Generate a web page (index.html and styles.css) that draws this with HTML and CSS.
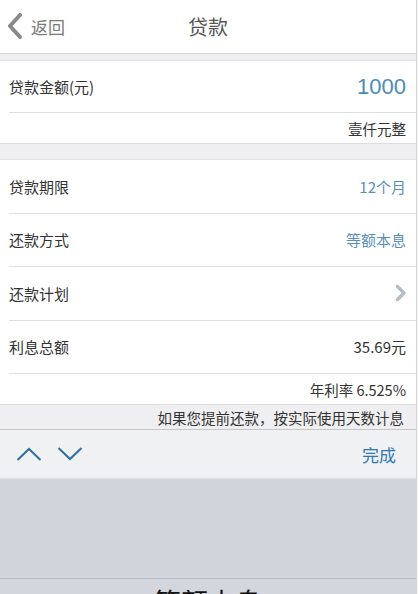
FILE: index.html
```html
<!DOCTYPE html>
<html lang="zh-CN">
<head>
    <meta charset="UTF-8">
    <meta name="viewport" content="width=device-width, initial-scale=1.0">
    <title>贷款</title>
    <link rel="stylesheet" href="styles.css">
</head>
<body>
    <div class="page">
        <div class="nav">
            <div class="nav-back">
                <svg width="16" height="26" viewBox="0 0 16 26"><path d="M13 2 L3 13 L13 24" fill="none" stroke="#8a8a8a" stroke-width="4" stroke-linecap="round" stroke-linejoin="round"/></svg>
                <span>返回</span>
            </div>
            <div class="nav-title">贷款</div>
        </div>

        <div class="section amount">
            <div class="row row-amount">
                <span class="label">贷款金额(元)</span>
                <span class="amount-value">1000</span>
            </div>
            <div class="row-sub">壹仟元整</div>
        </div>

        <div class="section list">
            <div class="row">
                <span class="label">贷款期限</span>
                <span class="value">12个月</span>
            </div>
            <div class="row">
                <span class="label">还款方式</span>
                <span class="value">等额本息</span>
            </div>
            <div class="row">
                <span class="label">还款计划</span>
                <svg class="arrow" width="12" height="18" viewBox="0 0 12 18"><path d="M2.5 2.5 L9 9 L2.5 15.5" fill="none" stroke="#b4bec4" stroke-width="3.5" stroke-linecap="round" stroke-linejoin="round"/></svg>
            </div>
            <div class="row">
                <span class="label">利息总额</span>
                <span class="value dark">35.69元</span>
            </div>
            <div class="row-sub rate">年利率 6.525%</div>
        </div>

        <div class="note">如果您提前还款，按实际使用天数计息</div>

        <div class="toolbar">
            <div class="toolbar-arrows">
                <svg width="26" height="16" viewBox="0 0 26 16"><path d="M1.5 14 L13 3 L24.5 14" fill="none" stroke="#2f6fa5" stroke-width="2"/></svg>
                <svg width="26" height="16" viewBox="0 0 26 16"><path d="M1.5 2 L13 13 L24.5 2" fill="none" stroke="#2f6fa5" stroke-width="2"/></svg>
            </div>
            <span class="done">完成</span>
        </div>

        <div class="picker"></div>
        <div class="picker-item">等额本息</div>
    </div>
</body>
</html>
```

FILE: styles.css
```css
body {
    margin: 0;
    background: #f3f3f5;
    font-family: "Noto Sans CJK SC", "Liberation Sans", sans-serif;
    overflow: hidden;
}
.page {
    width: 416px;
    height: 594px;
    border-right: 1px solid #d6d6d6;
    background: #efeff2;
    overflow: hidden;
}
.nav {
    position: relative;
    height: 53px;
    background: #fff;
    border-bottom: 1px solid #d4d4d4;
    display: flex;
    align-items: center;
    justify-content: center;
}
.nav-back {
    position: absolute;
    left: 7px;
    top: 13px;
    display: flex;
    align-items: center;
    gap: 8px;
    color: #7a7a7a;
    font-size: 17px;
}
.nav-title {
    font-size: 20px;
    color: #555;
}
.section {
    background: #fff;
    border-top: 1px solid #e2e2e2;
    border-bottom: 1px solid #dcdcdc;
}
.amount {
    margin-top: 6px;
}
.list {
    margin-top: 15px;
}
.row {
    height: 52.5px;
    margin-left: 9px;
    padding-right: 10px;
    display: flex;
    align-items: center;
    justify-content: space-between;
    border-bottom: 1px solid #dedede;
    font-size: 15px;
}
.row-amount {
    height: 51px;
}
.label {
    color: #333;
}
.amount-value {
    font-family: "Liberation Sans", sans-serif;
    font-size: 22px;
    color: #4b8cbb;
}
.value {
    font-size: 15px;
    color: #5b8fb8;
}
.value.dark {
    color: #333;
}
.arrow {
    margin-right: -1px;
}
.row-sub {
    height: 30px;
    padding-right: 10px;
    display: flex;
    align-items: center;
    justify-content: flex-end;
    font-size: 14.5px;
    color: #333;
}
.rate {
    height: 30px;
}
.note {
    height: 24px;
    padding-right: 12px;
    display: flex;
    align-items: center;
    justify-content: flex-end;
    font-size: 14.5px;
    color: #333;
    border-bottom: 1px solid #c6c6c6;
}
.toolbar {
    height: 48px;
    background: #f0f1f3;
    border-bottom: 1px solid #dfe0e3;
    display: flex;
    align-items: center;
    justify-content: space-between;
    padding: 0 20px 0 16px;
}
.toolbar-arrows {
    display: flex;
    gap: 15px;
}
.done {
    font-size: 17px;
    color: #2f78b3;
}
.picker {
    height: 99px;
    background: #d1d4db;
    border-bottom: 1px solid #b9bcc3;
}
.picker-item {
    height: 40px;
    background: #d3d6dc;
    text-align: center;
    font-size: 27px;
    line-height: 40px;
    padding-top: 3px;
    color: #111;
}
```
